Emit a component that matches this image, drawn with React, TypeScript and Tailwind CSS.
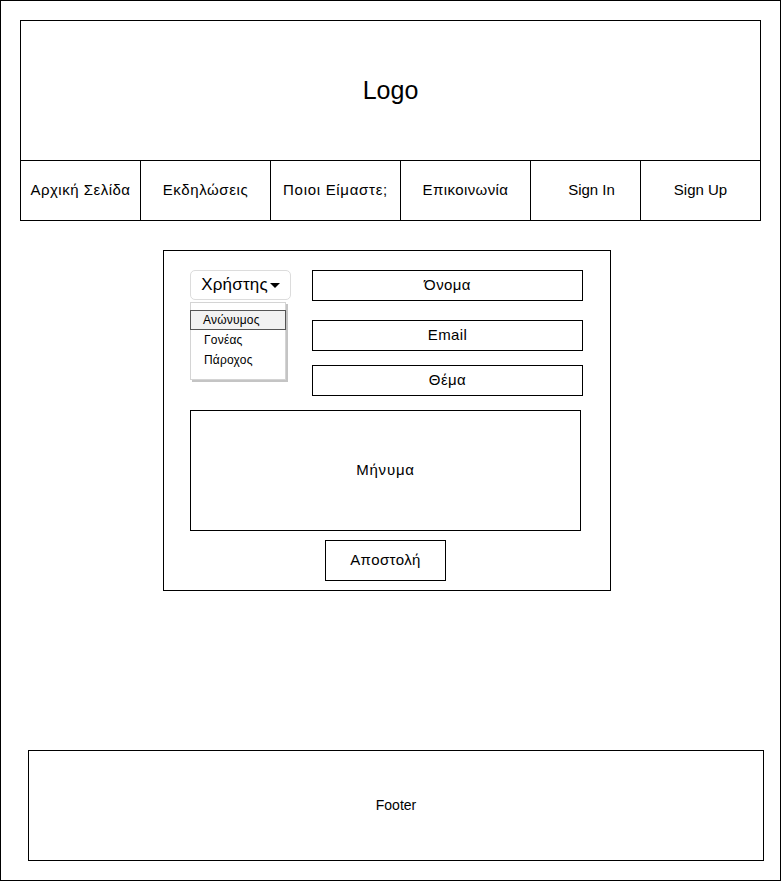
const navItems = [
  { label: "Αρχική Σελίδα", w: "w-[120px] border-r tracking-[0.5px]" },
  { label: "Εκδηλώσεις", w: "w-[130px] border-r tracking-[0.6px]" },
  { label: "Ποιοι Είμαστε;", w: "w-[130px] border-r tracking-[0.7px]" },
  { label: "Επικοινωνία", w: "w-[130px] border-r tracking-[0.4px]" },
  { label: "Sign In", w: "w-[110px] border-r pl-[12px]" },
  { label: "Sign Up", w: "w-[119px]" },
];

const roles = ["Ανώνυμος", "Γονέας", "Πάροχος"];

const Field = ({ label, className }: { label: string; className?: string }) => (
  <div
    className={`h-[31px] border border-black flex items-center justify-center text-[15px] tracking-[0.4px] ${className ?? ""}`}
  >
    {label}
  </div>
);

export default function App() {
  return (
    <div className="w-[781px] h-[882px] bg-white">
      <div
        className="w-[781px] h-[881px] border border-black pt-[19px] flex flex-col text-black"
        style={{ fontFamily: '"Liberation Sans", Arial, sans-serif' }}
      >
        {/* header */}
        <div className="ml-[19px] w-[741px] h-[201px] border border-black flex flex-col">
          <div className="h-[139px] flex items-center justify-center text-[25px]">
            Logo
          </div>
          <div className="h-[60px] border-t border-black flex">
            {navItems.map((item) => (
              <div
                key={item.label}
                className={`${item.w} border-black flex items-center justify-center text-[15px]`}
              >
                {item.label}
              </div>
            ))}
          </div>
        </div>

        {/* contact form */}
        <div className="mt-[29px] ml-[162px] w-[448px] h-[341px] border border-black pl-[26px] pt-[19px] flex flex-col">
          <div className="flex h-[126px]">
            <div className="relative w-[101px]">
              <button className="w-[101px] h-[30px] border border-[#dcdcdc] rounded-[5px] bg-white flex items-center justify-center text-[17px] tracking-[0.2px]">
                Χρήστης
                <span className="ml-[2px] mt-[1px] w-0 h-0 border-l-[5px] border-r-[5px] border-t-[5px] border-l-transparent border-r-transparent border-t-black" />
              </button>
              <div className="absolute left-0 top-[32px] w-[96px] h-[78px] bg-white border border-[#d4d4d4] shadow-[2px_2px_0_#c4c4c4] pt-[7px]">
                {roles.map((role, i) => (
                  <div
                    key={role}
                    className={`h-[20px] flex items-center pl-[12px] text-[12px] tracking-[0.2px] ${
                      i === 0
                        ? "-ml-px w-[96px] border border-[#555] bg-[#f2f2f2]"
                        : "border border-transparent"
                    }`}
                  >
                    {role}
                  </div>
                ))}
              </div>
            </div>
            <div className="ml-[21px] w-[271px] flex flex-col">
              <Field label="Όνομα" />
              <Field label="Email" className="mt-[19px]" />
              <Field label="Θέμα" className="mt-[14px]" />
            </div>
          </div>

          <div className="mt-[14px] w-[391px] h-[121px] border border-black flex items-center justify-center text-[15px] tracking-[0.8px]">
            Μήνυμα
          </div>

          <button className="mt-[9px] ml-[135px] w-[121px] h-[41px] border border-black bg-white flex items-center justify-center text-[15px] tracking-[0.4px]">
            Αποστολή
          </button>
        </div>

        {/* footer */}
        <div className="mt-[159px] ml-[27px] w-[736px] h-[111px] border border-black flex items-center justify-center text-[14px]">
          Footer
        </div>
      </div>
    </div>
  );
}
